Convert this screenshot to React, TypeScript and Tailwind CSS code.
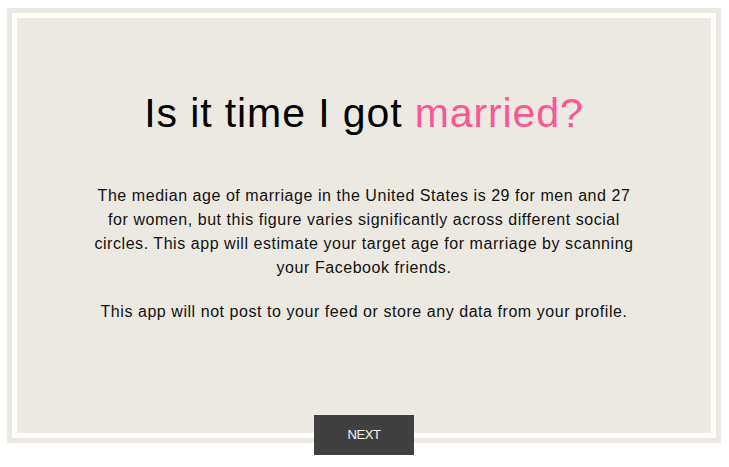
import React from "react";

export default function App() {
  return (
    <div className="w-[729px] h-[467px] bg-white pl-[7px] pt-[8px]" style={{ fontFamily: '"Liberation Sans", Arial, sans-serif' }}>
      <div className="relative w-[714px] h-[435px] border-[5px] border-[#ece9e2] bg-white p-[5px]">
        <div className="h-full w-full bg-[#ece9e2] flex flex-col items-center pt-[75px]">
          <h1 className="text-[41px] leading-[40px] text-black tracking-[0.9px]">
            Is it time I got <span className="text-[#fe5593]">married?</span>
          </h1>
          <div className="mt-[51px] text-[16px] leading-[24px] text-[#111] text-center tracking-[0.55px]">
            <p>
              The median age of marriage in the United States is 29 for men and 27
              <br />
              for women, but this figure varies significantly across different social
              <br />
              circles. This app will estimate your target age for marriage by scanning
              <br />
              your Facebook friends.
            </p>
            <p className="mt-[20px]">This app will not post to your feed or store any data from your profile.</p>
          </div>
        </div>
        <button className="absolute left-1/2 -translate-x-1/2 bottom-[-17px] w-[100px] h-[40px] bg-[#404040] text-[#f7f7f7] text-[13px] tracking-[-0.4px]">
          NEXT
        </button>
      </div>
    </div>
  );
}
